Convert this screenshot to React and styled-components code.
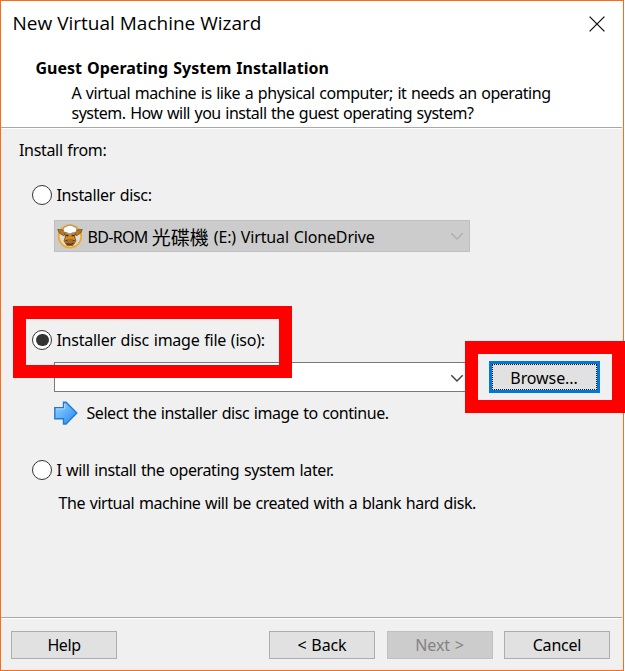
import React from 'react';
import styled, { createGlobalStyle } from 'styled-components';

const GlobalStyle = createGlobalStyle`
  * { box-sizing: border-box; }
  body { margin: 0; background: #fff; }
`;

const Dialog = styled.main`
  position: relative;
  display: flex;
  flex-direction: column;
  width: 624px;
  height: 671px;
  border: 1px solid #ff6a14;
  background: #f0f0f0;
  color: #000;
  font: 16px/20px 'Noto Sans', 'Noto Sans CJK TC', sans-serif;
  white-space: nowrap;
  overflow: visible;
`;

const Text = styled.span`
  letter-spacing: ${(p) => p.$track || 0}px;
  word-spacing: 0.85px;
`;

const Header = styled.header`
  height: 126px;
  background: #fff;
`;

const TitleBar = styled.div`
  display: flex;
  justify-content: space-between;
  height: 57px;
  padding: 10px 18.5px 0 11.5px;
`;

const Title = styled.h1`
  margin: 0;
  font: 400 19px/24px 'Open Sans', sans-serif;
  letter-spacing: 0;
`;

const CloseButton = styled.button`
  width: 16px;
  height: 16px;
  margin-top: 5px;
  padding: 0;
  border: 0;
  background: none;
  svg { display: block; }
`;

const Heading = styled.h2`
  margin: 0 0 5px 34.500px;
  font-size: 16px;
  line-height: 20px;
  letter-spacing: 0.01px;
  word-spacing: 0.85px;
`;

const Intro = styled.p`
  display: flex;
  flex-direction: column;
  margin: 0 0 0 70.500px;
`;

const Rule = styled.hr`
  flex: none;
  width: 621px;
  height: 2px;
  margin: 0;
  border: 0;
  border-top: 1px solid #a8a8a8;
  background: #fff;
`;

const Body = styled.section`
  display: flex;
  flex-direction: column;
  height: 488px;
  padding: 11px 0 0 18px;
`;

const Option = styled.label`
  display: flex;
  align-items: center;
  gap: 4px;
  height: 20px;
  margin: ${(p) => p.$top}px 0 0 13.400px;
`;

const Radio = styled.span`
  display: grid;
  place-items: center;
  width: 20px;
  height: 20px;
  border: 1.5px solid #333;
  border-radius: 50%;
  background: #fff;
  &::after {
    content: '';
    width: 12.500px;
    height: 12.500px;
    border-radius: 50%;
    background: ${(p) => (p.$checked ? '#333' : 'transparent')};
  }
`;

const ComboBox = styled.div`
  display: flex;
  align-items: center;
  width: 416px;
  height: ${(p) => (p.$disabled ? 32 : 30)}px;
  margin: ${(p) => p.$top}px 0 0 35px;
  padding: ${(p) => (p.$disabled ? 0 : 2)}px 5px 0 2px;
  border: 1px solid ${(p) => (p.$disabled ? '#bfbfbf' : '#7a7a7a')};
  background: ${(p) => (p.$disabled ? '#ccc' : '#fff')};
  color: ${(p) => (p.$disabled ? '#b0b0b0' : '#444')};
  svg { flex: none; }
`;

const DriveName = styled.span`
  display: flex;
  align-items: center;
  flex: 1;
  margin: 1px 0 0 4.500px;
  color: #000;
`;

const Cjk = styled.span`
  width: 62px;
  font: 400 19px/20px 'Noto Sans CJK TC', sans-serif;
`;

const FileRow = styled.div`
  display: flex;
  align-items: flex-start;
  margin-top: 12px;
`;

const Spacer = styled.span`
  flex: 1;
`;

const Hint = styled.div`
  display: flex;
  align-items: center;
  gap: 9px;
  height: 24px;
  margin: 8px 0 0 34.500px;
`;

const Note = styled.div`
  margin: 13px 0 0 39.600px;
`;

const Button = styled.button`
  width: 106px;
  height: 28px;
  padding: 0;
  border: 1px solid ${(p) => (p.disabled ? '#bfbfbf' : '#adadad')};
  background: ${(p) => (p.disabled ? '#ccc' : '#e1e1e1')};
  color: ${(p) => (p.disabled ? '#838383' : '#000')};
  font: inherit;
`;

const FocusButton = styled(Button)`
  width: 111px;
  height: 32px;
  margin: -1px 0 0 19px;
  padding: 2px 1px 0 0;
  border: 2px solid #0078d7;
  outline: 1px dotted #111;
  outline-offset: -4px;
  box-shadow: inset 0 0 0 1px #0078d7;
`;

const Footer = styled.footer`
  display: flex;
  flex: 1;
  padding: 12px 13px 0 10px;
`;

const NavButtons = styled.div`
  display: flex;
  gap: 11.5px;
  margin-left: auto;
`;

const Highlight = styled.div`
  position: absolute;
  left: ${(p) => p.$x - 1}px;
  top: ${(p) => p.$y - 1}px;
  width: ${(p) => p.$w}px;
  height: 72px;
  border: 13px solid #f00;
  pointer-events: none;
`;

const Chevron = () => (
  <svg width="14" height="9" viewBox="0 0 14 9" fill="none" stroke="currentColor" strokeWidth="1.5">
    <path d="M1.3 1.3 7 7l5.700-5.700" />
  </svg>
);

const DriveIcon = () => (
  <svg width="26" height="26" viewBox="0 0 26 26">
    <circle cx="13" cy="13.300" r="11.300" fill="#e2ddd3" stroke="#f4a62c" strokeWidth="1.700" />
    <path d="M.7 6.500 7 7l2 3-2.500 2.700L2.300 10Z" fill="#b97720" stroke="#493620" strokeWidth=".6" />
    <path d="M25.300 6.500 19 7l-2 3 2.500 2.700 4.200-2.700Z" fill="#b97720" stroke="#493620" strokeWidth=".6" />
    <path d="M7.500 9h11l-.8 5 1.300 4-3 4.500h-6L7 18l1.300-4Z" fill="#d78a22" stroke="#5c401c" strokeWidth=".7" />
    <path d="M6.500 8C6 4.500 8 3.500 9.500 3.700c2-2 5-2 7 0 2.500-.2 3.500 2 3 4.300-1.500 2.700-3.500 1-4.500 2-1.500 1-3 1-4.200 0-1.300-1-3.300.5-4.300-2Z" fill="#fff" stroke="#777" strokeWidth=".7" />
    <path d="M8.500 12.500h3M14.500 12.500h3" stroke="#3d3020" strokeWidth="1.700" />
    <path d="M8 17.500c1-2 9-2 10 0l-1 3.500c-2 1.500-6 1.500-8 0Z" fill="#a46e29" />
    <path d="M8.500 17.500h1.700M15.800 17.500h1.700M9.500 20.500q3.500 2 7-.5" fill="none" stroke="#4d351a" strokeWidth="1.100" />
  </svg>
);

const ArrowIcon = () => (
  <svg width="24" height="24" viewBox="0 0 24 24">
    <defs>
      <linearGradient id="arrow" x1="0" y1="0" x2="1" y2="1">
        <stop offset="0" stopColor="#9dd6ff" />
        <stop offset=".5" stopColor="#5cb0fb" />
        <stop offset="1" stopColor="#2582e9" />
      </linearGradient>
    </defs>
    <path d="M.8 6.700h8.700V1.200h2.500L22.800 12 12 23H9.500v-5.300H.8Z" fill="url(#arrow)" stroke="#2478cf" strokeWidth="1.400" />
    <path d="M2 7.900h8.700V3" fill="none" stroke="#c8e9ff" strokeWidth=".8" />
  </svg>
);

export default function App() {
  return (
    <>
      <GlobalStyle />
      <Dialog>
        <Header>
          <TitleBar>
            <Title>New Virtual Machine Wizard</Title>
            <CloseButton aria-label="Close">
              <svg width="16" height="16" viewBox="0 0 16 16" stroke="#111" strokeWidth="1.300">
                <path d="M.6.600 15.400 15.400M15.400.600.600 15.400" />
              </svg>
            </CloseButton>
          </TitleBar>
          <Heading>Guest Operating System Installation</Heading>
          <Intro>
            <Text $track={-0.455}>A virtual machine is like a physical computer; it needs an operating</Text>
            <Text $track={-0.49}>system. How will you install the guest operating system?</Text>
          </Intro>
        </Header>
        <Rule />
        <Body>
          <Text $track={-0.33}>Install from:</Text>
          <Option $top={25}>
            <Radio />
            <Text $track={-0.33}>Installer disc:</Text>
          </Option>
          <ComboBox $top={15} $disabled>
            <DriveIcon />
            <DriveName>
              <Text $track={-0.7}>BD-ROM&nbsp;</Text>
              <Cjk>光碟機</Cjk>
              <Text $track={-0.15}>(E:) Virtual CloneDrive</Text>
            </DriveName>
            <Chevron />
          </ComboBox>
          <Option $top={78}>
            <Radio $checked />
            <Text $track={-0.24}>Installer disc image file (iso):</Text>
          </Option>
          <FileRow>
            <ComboBox $top={0}>
              <Spacer />
              <Chevron />
            </ComboBox>
            <FocusButton>
              <Text $track={-0.1}>Browse...</Text>
            </FocusButton>
          </FileRow>
          <Hint>
            <ArrowIcon />
            <Text $track={-0.44}>Select the installer disc image to continue.</Text>
          </Hint>
          <Option $top={35}>
            <Radio />
            <Text $track={-0.37}>I will install the operating system later.</Text>
          </Option>
          <Note>
            <Text $track={-0.43}>The virtual machine will be created with a blank hard disk.</Text>
          </Note>
        </Body>
        <Rule />
        <Footer>
          <Button>
            <Text $track={-0.45}>Help</Text>
          </Button>
          <NavButtons>
            <Button><Text $track={-0.1}>&lt; Back</Text></Button>
            <Button disabled><Text $track={-0.15}>Next &gt;</Text></Button>
            <Button><Text $track={-0.2}>Cancel</Text></Button>
          </NavButtons>
        </Footer>
        <Highlight $x={13} $y={306} $w={279} />
        <Highlight $x={465} $y={341} $w={160} />
      </Dialog>
    </>
  );
}
